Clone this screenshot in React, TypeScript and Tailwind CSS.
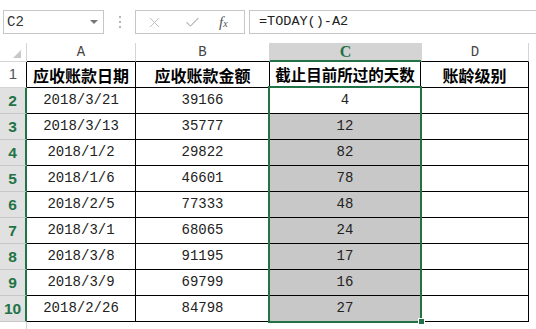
import { X, Check } from 'lucide-react';

const rows = [
  ['2018/3/21', '39166', '4'],
  ['2018/3/13', '35777', '12'],
  ['2018/1/2', '29822', '82'],
  ['2018/1/6', '46601', '78'],
  ['2018/2/5', '77333', '48'],
  ['2018/3/1', '68065', '24'],
  ['2018/3/8', '91195', '17'],
  ['2018/3/9', '69799', '16'],
  ['2018/2/26', '84798', '27'],
];

const mono = "font-['Liberation_Mono',monospace]";
const cjk = "font-['Noto_Sans_CJK_SC',sans-serif]";

export default function App() {
  return (
    <div className="relative w-[536px] h-[329px] overflow-hidden bg-white text-[#222]">
      {/* formula bar */}
      <div className="h-[43px] flex items-start pt-[10px]">
        <div className="ml-[3px] w-[101px] h-[24px] border border-[#c6c6c6] flex items-center justify-between pl-[3px] pr-[5px]">
          <span className={`${mono} text-[14px] text-[#333]`}>C2</span>
          <span className="w-0 h-0 border-x-[4px] border-x-transparent border-t-[4px] border-t-[#777]" />
        </div>
        <div className="w-[31px] h-[24px] flex flex-col items-center justify-center gap-[3px]">
          <span className="w-[2px] h-[2px] bg-[#b5b5b5]" />
          <span className="w-[2px] h-[2px] bg-[#b5b5b5]" />
          <span className="w-[2px] h-[2px] bg-[#b5b5b5]" />
        </div>
        <div className="w-[110px] h-[24px] border border-[#c6c6c6] flex items-center pl-[10px]">
          <X size={17} strokeWidth={1.3} className="text-[#b9b9b9]" />
          <Check size={17} strokeWidth={1.5} className="text-[#b9b9b9] ml-[21px]" />
          <span className="ml-[18px] italic font-['Liberation_Serif',serif] text-[15px] text-[#555] leading-none">
            f<span className="text-[10px]">x</span>
          </span>
        </div>
        <div className="ml-[4px] flex-1 h-[24px] border border-r-0 border-[#c6c6c6] flex items-center pl-[9px]">
          <span className={`${mono} text-[13.5px] text-[#222]`}>=TODAY()-A2</span>
        </div>
      </div>

      {/* column headers */}
      <div className="flex h-[19px]">
        <div className="w-[27px] border-r border-b border-[#d4d4d4] flex items-end justify-end pr-[5px] pb-[3px]">
          <span className="w-0 h-0 border-l-[8px] border-l-transparent border-b-[8px] border-b-[#c8c8c8]" />
        </div>
        <div className={`w-[109px] border-r border-[#d4d4d4] border-b border-b-black flex items-center justify-center ${mono} text-[14px] text-[#444]`}>A</div>
        <div className={`w-[134px] border-r border-[#d4d4d4] border-b border-b-black flex items-center justify-center ${mono} text-[14px] text-[#444]`}>B</div>
        <div className="w-[151px] bg-[#d4d4d4] border-b-2 border-[#217346] flex items-center justify-center font-['Liberation_Serif',serif] font-bold text-[16px] text-[#217346]">C</div>
        <div className={`w-[108px] border-l border-r border-[#d4d4d4] border-b border-b-black flex items-center justify-center ${mono} text-[14px] text-[#444]`}>D</div>
        <div className="flex-1" />
      </div>

      {/* header row 1 */}
      <div className="flex h-[26px]">
        <div className="w-[27px] border-r border-r-black border-b border-b-[#d4d4d4] flex items-center justify-center font-['Liberation_Sans',sans-serif] text-[15px] text-[#555]">1</div>
        <div className={`w-[109px] border-r border-b border-black flex items-center justify-center ${cjk} font-bold text-[16px] text-black`}>应收账款日期</div>
        <div className={`w-[134px] border-r border-b border-black flex items-center justify-center ${cjk} font-bold text-[16px] text-black`}>应收账款金额</div>
        <div className={`w-[151px] border-r border-b border-black flex items-center justify-center ${cjk} font-bold text-[15.5px] text-black whitespace-nowrap`}>截止目前所过的天数</div>
        <div className={`w-[108px] border-r border-b border-black flex items-center justify-center ${cjk} font-bold text-[16px] text-black`}>账龄级别</div>
      </div>

      {rows.map((r, i) => (
        <div key={i} className="flex h-[26px]">
          <div className="w-[27px] bg-[#e1e1e1] border-r-2 border-r-[#217346] border-b border-b-[#c8c8c8] flex items-center justify-center font-['Liberation_Sans',sans-serif] font-bold text-[15.5px] text-[#217346]">
            {i + 2}
          </div>
          <div className={`w-[109px] border-r border-b border-black flex items-center justify-center ${mono} text-[14px]`}>{r[0]}</div>
          <div className={`w-[134px] border-r border-b border-black flex items-center justify-center ${mono} text-[14px]`}>{r[1]}</div>
          <div className={`w-[151px] border-r border-b border-black flex items-center justify-center ${mono} text-[14px] ${i === 0 ? 'bg-white' : 'bg-[#c8c8c8]'}`}>{r[2]}</div>
          <div className="w-[108px] border-r border-b border-black" />
        </div>
      ))}

      {/* row 11, cut off by the window edge as in the screenshot */}
      <div className="flex h-[26px]">
        <div className="w-[27px] border-r border-[#d4d4d4] flex items-start justify-center pt-[4px] font-['Liberation_Sans',sans-serif] text-[15px] text-[#555]">11</div>
      </div>

      {/* selection */}
      <div className="absolute left-[268px] top-[86px] w-[154px] h-[237px] border-2 border-[#217346]" />
      <div className="absolute left-[418px] top-[318px] w-[7px] h-[7px] bg-[#217346] border border-white" />
    </div>
  );
}
